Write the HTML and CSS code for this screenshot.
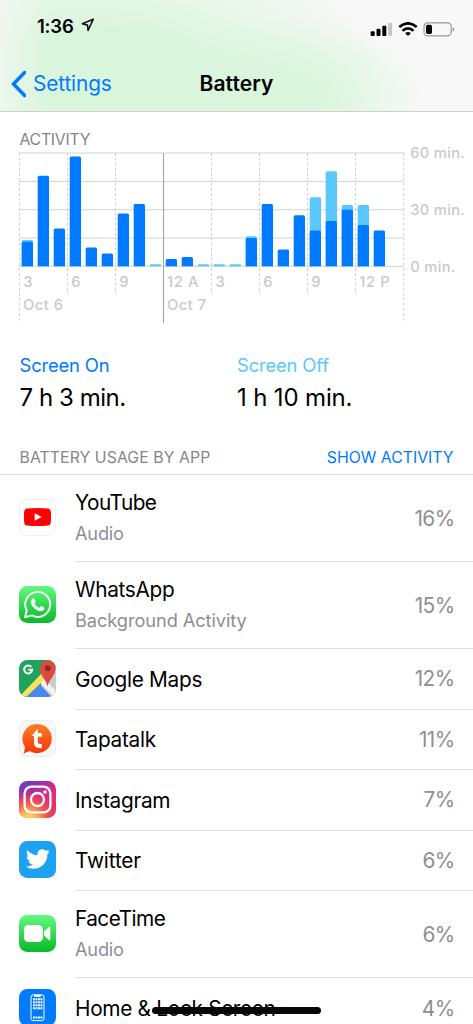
FILE: index.html
```html
<!DOCTYPE html>
<html lang="en">
<head>
<meta charset="utf-8">
<title>Battery</title>
<link rel="stylesheet" href="styles.css">
</head>
<body>
<div class="screen">
  <header class="header">
    <div class="status">
      <div class="status-left">
        <span class="time">1:36</span>
        <svg class="location" width="14" height="14" viewBox="0 0 14 14"><path d="M12.3 1.200 1.300 5.800l5.200 1.300.6 5.400z" fill="none" stroke="#111" stroke-width="1.600" stroke-linejoin="round"/></svg>
      </div>
      <svg class="indicators" width="86" height="16" viewBox="0 0 86 16">
        <rect x=".7" y="9.3" width="4" height="4.7" rx="1"/>
        <rect x="6.5" y="6.7" width="4" height="7.3" rx="1"/>
        <rect x="12.3" y="3.7" width="4" height="10.3" rx="1"/>
        <rect x="18.1" y=".7" width="4" height="13.3" rx="1" fill="#c4c8c5"/>
        <g fill="none" stroke="#000" stroke-width="2.6"><path d="M29.3 5.1q8.7-7.6 17.4 0"/><path d="M32.5 8.7q5.5-4.7 11 0"/></g>
        <path d="M35.1 11.2q2.9-2.3 5.8 0L38 14z"/>
        <rect x="54" y=".9" width="27.2" height="13" rx="3.8" fill="none" stroke="#999" stroke-width="1.2"/>
        <rect x="56" y="2.7" width="6" height="9.4" rx="1.8"/>
        <path d="M82.6 5.2q3.4 2.2 0 4.6z" fill="#999"/>
      </svg>
    </div>
    <nav class="nav">
      <div class="back">
        <svg width="16" height="28" viewBox="0 0 16 28"><path d="M14.600 2.500 3.500 14l11.100 11.500" fill="none" stroke="#007aff" stroke-width="3.500" stroke-linecap="round"/></svg>
        <span>Settings</span>
      </div>
      <h1 class="title">Battery</h1>
    </nav>
  </header>

  <svg class="chart" width="473" height="218" viewBox="0 112 473 218">
    <text x="19.5" y="145" class="chart-title" textLength="71">ACTIVITY</text>
    <path class="grid-top" d="M19 153H404"/>
    <path class="grid" d="M19 181.4H404M19 209.7H404M19 238H404M19 266.4H404"/>
    <path class="dash" d="M19.5 153V323M67.5 153V294M115.5 153V294M211.5 153V294M259.5 153V294M307.5 153V294M355.5 153V294M403.7 153V323"/>
    <path class="midnight" d="M163.5 153V323"/>
    <g class="off">
      <path d="M21.7 266.3V241.5q0-1.5 1.5-1.5h8.3q1.5 0 1.5 1.5v24.8z"/>
      <rect x="149.7" y="264.2" width="11.3" height="2" rx=".8"/>
      <rect x="197.7" y="264.2" width="11.3" height="2" rx=".8"/>
      <rect x="213.7" y="264.2" width="11.3" height="2" rx=".8"/>
      <rect x="229.7" y="264.2" width="11.3" height="2" rx=".8"/>
      <path d="M245.7 266.3V237.8q0-1.5 1.5-1.5h8.3q1.5 0 1.5 1.5v28.5z"/>
      <path d="M309.7 266.3V198.8q0-1.5 1.5-1.5h8.3q1.5 0 1.5 1.5v67.5z"/>
      <path d="M325.7 266.3V172.8q0-1.5 1.5-1.5h8.3q1.5 0 1.5 1.5v93.5z"/>
      <path d="M341.7 266.3V206.5q0-1.5 1.5-1.5h8.3q1.5 0 1.5 1.5v59.8z"/>
      <path d="M357.7 266.3V206.5q0-1.5 1.5-1.5h8.3q1.5 0 1.5 1.5v59.8z"/>
    </g>
    <g class="on">
      <path d="M21.7 266.3V243.2q0-1.5 1.5-1.5h8.3q1.5 0 1.5 1.5v23.1z"/>
      <path d="M37.7 266.3V177.3q0-1.5 1.5-1.5h8.3q1.5 0 1.5 1.5v89z"/>
      <path d="M53.7 266.3V230q0-1.5 1.5-1.5h8.3q1.5 0 1.5 1.5v36.3z"/>
      <path d="M69.7 266.3V158q0-1.5 1.5-1.5h8.3q1.5 0 1.5 1.5v108.3z"/>
      <path d="M85.7 266.3V249q0-1.5 1.5-1.5h8.3q1.5 0 1.5 1.5v17.3z"/>
      <path d="M101.7 266.3V255q0-1.5 1.5-1.5h8.3q1.5 0 1.5 1.5v11.3z"/>
      <path d="M117.7 266.3V215q0-1.5 1.5-1.5h8.3q1.5 0 1.5 1.5v51.3z"/>
      <path d="M133.7 266.3V205.6q0-1.5 1.5-1.5h8.3q1.5 0 1.5 1.5v60.7z"/>
      <path d="M165.7 266.3V260.5q0-1.5 1.5-1.5h8.3q1.5 0 1.5 1.5v5.8z"/>
      <path d="M181.7 266.3V258.5q0-1.5 1.5-1.5h8.3q1.5 0 1.5 1.5v7.8z"/>
      <path d="M245.7 266.3V239.5q0-1.5 1.5-1.5h8.3q1.5 0 1.5 1.5v26.8z"/>
      <path d="M261.7 266.3V205.6q0-1.5 1.5-1.5h8.3q1.5 0 1.5 1.5v60.7z"/>
      <path d="M277.7 266.3V250.9q0-1.5 1.5-1.5h8.3q1.5 0 1.5 1.5v15.4z"/>
      <path d="M293.7 266.3V216.8q0-1.5 1.5-1.5h8.3q1.5 0 1.5 1.5v49.5z"/>
      <path d="M309.7 266.3V232q0-1.5 1.5-1.5h8.3q1.5 0 1.5 1.5v34.3z"/>
      <path d="M325.7 266.3V222.5q0-1.5 1.5-1.5h8.3q1.5 0 1.5 1.5v43.8z"/>
      <path d="M341.7 266.3V211.2q0-1.5 1.5-1.5h8.3q1.5 0 1.5 1.5v55.1z"/>
      <path d="M357.7 266.3V226.5q0-1.5 1.5-1.5h8.3q1.5 0 1.5 1.5v39.8z"/>
      <path d="M373.7 266.3V232q0-1.5 1.5-1.5h8.3q1.5 0 1.5 1.5v34.3z"/>
    </g>
    <g class="axis">
      <text x="23.2" y="287">3</text>
      <text x="71.2" y="287">6</text>
      <text x="119.2" y="287">9</text>
      <text x="167" y="287" textLength="31.5">12 A</text>
      <text x="215.5" y="287">3</text>
      <text x="263.2" y="287">6</text>
      <text x="311.2" y="287">9</text>
      <text x="359.2" y="287" textLength="30.5">12 P</text>
      <text x="22.9" y="310" textLength="40">Oct 6</text>
      <text x="167.1" y="310" textLength="39">Oct 7</text>
      <text x="410.3" y="158.3" textLength="54.5">60 min.</text>
      <text x="410.3" y="215" textLength="54.5">30 min.</text>
      <text x="410.3" y="271.8" textLength="45">0 min.</text>
    </g>
  </svg>

  <section class="totals">
    <div class="total">
      <div class="label label-on">Screen On</div>
      <div class="value">7 h 3 min.</div>
    </div>
    <div class="total">
      <div class="label label-off">Screen Off</div>
      <div class="value value-off">1 h 10 min.</div>
    </div>
  </section>

  <div class="list-head">
    <span class="list-title">BATTERY USAGE BY APP</span>
    <span class="list-action">SHOW ACTIVITY</span>
  </div>

  <ul class="list">
    <li class="row tall">
      <svg class="icon" viewBox="0 0 37 37"><rect x=".5" y=".5" width="36" height="36" rx="8" fill="#fff" stroke="#f0f0f0"/><path d="M8 9.500q10.500-1.200 21 0 2.600.3 2.800 3 .5 5.500 0 11-.2 2.700-2.800 3-10.500 1.200-21 0-2.600-.3-2.800-3-.5-5.500 0-11 .2-2.700 2.800-3z" fill="#f00"/><path d="m15.700 14.200 7 3.800-7 3.800z" fill="#fff"/></svg>
      <div class="body"><div><div class="name tight">YouTube</div><div class="sub">Audio</div></div><span class="pct">16%</span></div>
    </li>
    <li class="row tall">
      <svg class="icon" viewBox="0 0 37 37"><defs><linearGradient id="green" x2="0" y2="1"><stop stop-color="#62fa7f"/><stop offset="1" stop-color="#08b928"/></linearGradient></defs><rect width="37" height="37" rx="8.300" fill="url(#green)"/><path d="M6 31.300 7.800 24.500A12.500 12.500 0 1 1 12.800 29.400z" fill="none" stroke="#fff" stroke-width="1.900" stroke-linejoin="round"/><path d="M14 12.400c.7-.3 1.300-.1 1.600.5l1 2.400c.3.800-.9 1.700-1 2.100.8 2 2.500 3.500 4.600 4.400.5 0 1.400-1.700 2-1.700l2.800 1.400c.7.400.3 1.800-.2 2.500-1.400 1.600-4 1.400-6 .5-3.100-1.300-5.400-3.800-6.500-6.500-.7-2-.2-4.700 1.700-5.600z" fill="#fff"/></svg>
      <div class="body"><div><div class="name">WhatsApp</div><div class="sub wide">Background Activity</div></div><span class="pct">15%</span></div>
    </li>
    <li class="row">
      <svg class="icon" viewBox="0 0 37 37"><clipPath id="tile"><rect width="37" height="37" rx="8.300"/></clipPath><g clip-path="url(#tile)"><path fill="#20a45d" d="M0 0h37v37H0z"/><path d="M22 15 37 7v30H22z" fill="#ccc"/><path d="m18.500 22 15 16H3z" fill="#4788f0"/><path d="m18.500 20 4-4L39 33v8z" fill="#f3f3f3"/><path d="M24 12v9L5 39l-5-2z" fill="#fce057"/></g><path d="M28.500 27C28 21 20.800 15 20.800 8.500a7.900 7.900 0 0 1 15.800 0C36.600 15 29 21 28.500 27z" fill="#dd4b3e"/><circle cx="28.700" cy="8.200" r="2.900" fill="#862b25"/><path d="M12.300 6.900a4 4 0 1 0 .9 2.800H9.300" fill="none" stroke="#fff" stroke-width="1.900"/></svg>
      <div class="body"><div class="name">Google Maps</div><span class="pct">12%</span></div>
    </li>
    <li class="row">
      <svg class="icon" viewBox="0 0 37 37"><defs><linearGradient id="orange" x2="0" y2="1"><stop stop-color="#fc7f25"/><stop offset="1" stop-color="#f7350b"/></linearGradient></defs><rect x=".5" y=".5" width="36" height="36" rx="8" fill="#faf7f6" stroke="#efeceb"/><path d="M18.500 4a14.600 14.600 0 1 1-7.500 27.300Q7.500 31.500 4.300 34q1.700-3.300 1.500-7.500A14.600 14.600 0 0 1 18.500 4z" fill="url(#orange)"/><path d="M12.500 15.900 18.800 8.800v4.300h4v3.600h-4v5.200q0 2.200 4 2v4.200q-7.800.4-7.800-4.900v-7.300z" fill="#fff"/></svg>
      <div class="body"><div class="name">Tapatalk</div><span class="pct">11%</span></div>
    </li>
    <li class="row">
      <svg class="icon" viewBox="0 0 37 37"><defs><linearGradient id="violet" x1="0" y1="0" x2=".75" y2="1"><stop stop-color="#5146cf"/><stop offset=".35" stop-color="#a52ca9"/><stop offset=".7" stop-color="#e62e70"/><stop offset="1" stop-color="#e13769"/></linearGradient><radialGradient id="sun" cx=".26" cy="1.060" r=".85"><stop stop-color="#ffdd73"/><stop offset=".25" stop-color="#fdbb55"/><stop offset=".6" stop-color="#f55945" stop-opacity=".85"/><stop offset="1" stop-color="#e72c70" stop-opacity="0"/></radialGradient></defs><rect width="37" height="37" rx="8.300" fill="url(#violet)"/><rect width="37" height="37" rx="8.300" fill="url(#sun)"/><g fill="none" stroke="#fff" stroke-width="2.300"><rect x="5.600" y="5.600" width="25.800" height="25.800" rx="7"/><circle cx="18.500" cy="18.500" r="6.500"/></g><circle cx="26" cy="11" r="1.700" fill="#fff"/></svg>
      <div class="body"><div class="name">Instagram</div><span class="pct">7%</span></div>
    </li>
    <li class="row">
      <svg class="icon" viewBox="0 0 37 37"><rect width="37" height="37" rx="8.300" fill="#1da1f2"/><g transform="translate(6.800 6)"><path d="M23.950 4.570a10 10 0 0 1-2.820.77 4.960 4.960 0 0 0 2.160-2.720c-.95.550-2 .950-3.130 1.180a4.920 4.920 0 0 0-8.380 4.480C7.690 8.090 4.070 6.130 1.640 3.160a4.820 4.820 0 0 0-.67 2.480c0 1.710.87 3.210 2.190 4.100a4.900 4.900 0 0 1-2.230-.62v.06a4.920 4.920 0 0 0 3.950 4.830 5 5 0 0 1-2.210.080 4.940 4.940 0 0 0 4.600 3.420A9.870 9.870 0 0 1 0 19.540a13.990 13.990 0 0 0 7.560 2.210c9.050 0 14-7.500 14-13.980 0-.21 0-.42-.02-.63a9.940 9.940 0 0 0 2.410-2.570z" fill="#fff"/></g></svg>
      <div class="body"><div class="name loose">Twitter</div><span class="pct">6%</span></div>
    </li>
    <li class="row tall">
      <svg class="icon" viewBox="0 0 37 37"><rect width="37" height="37" rx="8.300" fill="url(#green)"/><rect x="5" y="10" width="18.800" height="17" rx="4.300" fill="#fff"/><path d="m25 16.500 5-4.600q1.300-.8 1.300.6v12q0 1.400-1.300.6l-5-4.600z" fill="#fff"/></svg>
      <div class="body"><div><div class="name tight">FaceTime</div><div class="sub">Audio</div></div><span class="pct">6%</span></div>
    </li>
    <li class="row last">
      <svg class="icon" viewBox="0 0 37 37"><rect width="37" height="37" rx="8.300" fill="#007aff"/><rect x="12" y="5.800" width="13" height="25.800" rx="2.200" fill="none" stroke="#fff"/><path d="M15 6h7v1.200q-.3.700-1 .7h-5q-.7 0-1-.7z" fill="#fff"/><path d="M14 10.200h9.500M14 13.200h9.500M14 16.200h9.500M14 19.200h9.500M14 28.500h9.500" stroke="#fff" stroke-width="1.900" stroke-dasharray="1.900 .6"/></svg>
      <div class="body"><div class="name">Home &amp; Lock Screen</div><span class="pct">4%</span></div>
    </li>
  </ul>
  <div class="home-bar"></div>
</div>
</body>
</html>
```
FILE: styles.css
```css
* { box-sizing: border-box; }
body { margin: 0; background: #fff; font-family: Inter, "Liberation Sans", sans-serif; color: #000; }
.screen { position: relative; width: 473px; height: 1024px; overflow: hidden; display: flex; flex-direction: column; white-space: nowrap; }
.header {
  height: 112px;
  flex: none;
  border-bottom: 1px solid #cdd2ce;
  background:
    linear-gradient(90deg, rgba(247,248,247,.65) 0, rgba(247,248,247,0) 50px),
    radial-gradient(ellipse 300px 160px at 90px 92px, #d9f5dc 0, #d9f5dc 38%, rgba(217,245,220,0) 100%),
    radial-gradient(ellipse 140px 85px at 285px 100px, #d9f5dc 0, #d9f5dc 20%, rgba(217,245,220,0) 100%),
    #f8f8f8;
}
.status { height: 56px; display: flex; justify-content: space-between; padding: 0 17.500px 0 37px; }
.status-left { display: flex; gap: 4px; padding-top: 14px; }
.time { font-size: 18.500px; font-weight: 600; line-height: 24px; letter-spacing: -.2px; }
.location { margin-top: 4px; margin-left: 3px; }
.indicators { margin-top: 22px; }
.nav { height: 55px; display: grid; grid-template-columns: 1fr auto 1fr; align-items: center; padding-left: 10px; }
.back { display: flex; align-items: center; gap: 7px; color: #007aff; font-size: 20.800px; letter-spacing: -.12px; line-height: 28px; }
.title { margin: 0 10px 0 0; font-size: 21px; font-weight: 600; line-height: 28px; letter-spacing: .1px; }

.chart { flex: none; display: block; }
.chart-title { font-size: 15.800px; fill: #85858a; }
.grid-top { stroke: #e0e0e2; stroke-width: 1.600; }
.grid { stroke: #d3d3d5; stroke-width: 1; }
.dash { stroke: #ccccd0; stroke-width: 1; stroke-dasharray: 2.500 2.500; }
.midnight { stroke: #aaaaac; stroke-width: 1.200; }
.off { fill: #5ac8fa; }
.on { fill: #007aff; }
.axis { font-size: 14.700px; font-weight: 500; fill: #c9c9ce; }

.totals { height: 108px; flex: none; display: grid; grid-template-columns: 217.500px 1fr; padding: 23px 0 0 19.500px; }
.label { font-size: 18.400px; line-height: 24px; letter-spacing: -.15px; }
.label-on { color: #007aff; }
.label-off { color: #5ac8fa; }
.value { margin-top: 6px; font-size: 24px; line-height: 30px; letter-spacing: -.45px; }
.value-off { letter-spacing: -.15px; }

.list-head { height: 37px; flex: none; display: flex; justify-content: space-between; align-items: center; padding: 2px 19.500px 0 19.500px; font-size: 15.800px; border-bottom: 1px solid #dcdcde; }
.list-title { color: #85858a; letter-spacing: .08px; }
.list-action { color: #007aff; }
.list { list-style: none; margin: 0; padding: 0; }
.row { height: 60.500px; display: flex; align-items: center; gap: 19px; padding-left: 19px; }
.tall { height: 87px; }
.icon { width: 37px; height: 37px; flex: none; margin-bottom: 2px; }
.tall .icon { margin-bottom: 3px; }
.body { flex: 1; height: 100%; display: flex; align-items: center; justify-content: space-between; padding-right: 18.500px; border-bottom: 1px solid #e0e0e2; }
.last .body { border: 0; }
.name { font-size: 20.800px; line-height: 28px; letter-spacing: -.3px; padding-top: 2px; }
.tall .name { padding-top: 0; margin-top: -2px; }
.tight { letter-spacing: -.55px; }
.loose { letter-spacing: -.15px; }
.sub { margin-top: 3px; color: #8e8e93; font-size: 18.200px; line-height: 26px; letter-spacing: -.2px; }
.wide { letter-spacing: -.06px; }
.pct { color: #8e8e93; font-size: 20.800px; letter-spacing: -.6px; }
.home-bar { position: absolute; left: 152px; top: 1007px; width: 169px; height: 6.500px; border-radius: 4px; background: #080808; }
```
